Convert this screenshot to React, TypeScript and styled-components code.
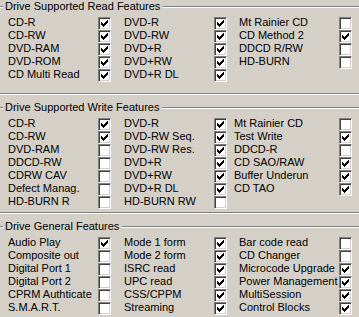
import React from "react";
import styled, { createGlobalStyle } from "styled-components";

const GlobalStyle = createGlobalStyle`
	html, body {
		margin: 0;
		padding: 0;
		background: #d4d0c8;
	}
	body {
		font-family: "Liberation Sans", Arial, sans-serif;
		font-size: 11px;
		color: #000;
	}
`

type Item = { label: string; on: boolean } | null;

const groups: { title: string; thirdGap: number; bottom: number; cols: Item[][] }[] = [
	{
		title: "Drive Supported Read Features",
		thirdGap: 12,
		bottom: 11,
		cols: [
			[
				{ label: "CD-R", on: true },
				{ label: "CD-RW", on: true },
				{ label: "DVD-RAM", on: true },
				{ label: "DVD-ROM", on: true },
				{ label: "CD Multi Read", on: true },
			],
			[
				{ label: "DVD-R", on: true },
				{ label: "DVD-RW", on: true },
				{ label: "DVD+R", on: true },
				{ label: "DVD+RW", on: true },
				{ label: "DVD+R DL", on: true },
			],
			[
				{ label: "Mt Rainier CD", on: false },
				{ label: "CD Method 2", on: true },
				{ label: "DDCD R/RW", on: false },
				{ label: "HD-BURN", on: false },
				null,
			],
		],
	},
	{
		title: "Drive Supported Write Features",
		thirdGap: 7,
		bottom: 3,
		cols: [
			[
				{ label: "CD-R", on: true },
				{ label: "CD-RW", on: true },
				{ label: "DVD-RAM", on: false },
				{ label: "DDCD-RW", on: false },
				{ label: "CDRW CAV", on: false },
				{ label: "Defect Manag.", on: false },
				{ label: "HD-BURN R", on: false },
			],
			[
				{ label: "DVD-R", on: true },
				{ label: "DVD-RW Seq.", on: true },
				{ label: "DVD-RW Res.", on: true },
				{ label: "DVD+R", on: true },
				{ label: "DVD+RW", on: true },
				{ label: "DVD+R DL", on: true },
				{ label: "HD-BURN RW", on: false },
			],
			[
				{ label: "Mt Rainier CD", on: false },
				{ label: "Test Write", on: true },
				{ label: "DDCD-R", on: false },
				{ label: "CD SAO/RAW", on: true },
				{ label: "Buffer Underun", on: true },
				{ label: "CD TAO", on: true },
				null,
			],
		],
	},
	{
		title: "Drive General Features",
		thirdGap: 12,
		bottom: 4,
		cols: [
			[
				{ label: "Audio Play", on: true },
				{ label: "Composite out", on: false },
				{ label: "Digital Port 1", on: false },
				{ label: "Digital Port 2", on: false },
				{ label: "CPRM Authticate", on: false },
				{ label: "S.M.A.R.T.", on: false },
			],
			[
				{ label: "Mode 1 form", on: true },
				{ label: "Mode 2 form", on: true },
				{ label: "ISRC read", on: true },
				{ label: "UPC read", on: true },
				{ label: "CSS/CPPM", on: true },
				{ label: "Streaming", on: true },
			],
			[
				{ label: "Bar code read", on: false },
				{ label: "CD Changer", on: false },
				{ label: "Microcode Upgrade", on: true },
				{ label: "Power Management", on: true },
				{ label: "MultiSession", on: true },
				{ label: "Control Blocks", on: true },
			],
		],
	},
];

// classic win9x check glyph, pixel by pixel (coords in the 13x13 box)
const checkPixels: [number, number][] = [
	[9, 3],
	[8, 4], [9, 4],
	[3, 5], [7, 5], [8, 5], [9, 5],
	[3, 6], [4, 6], [6, 6], [7, 6], [8, 6],
	[3, 7], [4, 7], [5, 7], [6, 7], [7, 7],
	[4, 8], [5, 8], [6, 8],
	[5, 9],
];

const CheckBox = ({ on }: { on: boolean }) => (
	<Box>
		{on && (
			<svg width="11" height="11" viewBox="1 1 11 11" shapeRendering="crispEdges">
				{checkPixels.map(([x, y]) => (
					<rect key={`${x}-${y}`} x={x} y={y} width="1" height="1" fill="#000" />
				))}
			</svg>
		)}
	</Box>
);

export default function App() {
	return (
		<>
			<GlobalStyle />
			<Page>
				{groups.map((g) => {
					const rows = g.cols[0].length;
					const cells: React.ReactNode[] = [];
					for (let r = 0; r < rows; r++) {
						g.cols.forEach((col, c) => {
							const item = col[r];
							cells.push(<Label key={`l${r}${c}`}>{item ? item.label : ""}</Label>);
							cells.push(
								<Cell key={`c${r}${c}`}>{item && <CheckBox on={item.on} />}</Cell>
							);
						});
					}
					return (
						<Group key={g.title}>
							<Legend>
								<Dash />
								<Title>{g.title}</Title>
								<Rule />
							</Legend>
							<Grid $thirdGap={g.thirdGap} $bottom={g.bottom}>
								{cells}
							</Grid>
							<Etched />
						</Group>
					);
				})}
			</Page>
		</>
	);
}

const Page = styled.div`
	width: 359px;
	height: 317px;
	overflow: hidden;
	display: flex;
	flex-direction: column;
	gap: 6px;
`

const Group = styled.section`
	display: flex;
	flex-direction: column;
`

const Legend = styled.div`
	display: flex;
	align-items: center;
	height: 13px;
`

const Etched = styled.div`
	height: 0;
	border-top: 1px solid #808080;
	border-bottom: 1px solid #ffffff;
`

const Dash = styled(Etched)`
	width: 3px;
`

const Rule = styled(Etched)`
	flex: 1 1 auto;
`

const Title = styled.span`
	padding: 0 3px 0 2px;
	line-height: 13px;
	white-space: nowrap;
`

const Grid = styled.div<{ $thirdGap: number; $bottom: number }>`
	display: grid;
	grid-template-columns: 90px 13px 103px 13px 112px 13px;
	grid-auto-rows: 13px;
	padding: 4px 0 ${(p) => p.$bottom}px 8px;

	& > :nth-child(6n + 3) {
		padding-left: 13px;
	}
	& > :nth-child(6n + 5) {
		padding-left: ${(p) => p.$thirdGap}px;
	}
`

const Label = styled.span`
	line-height: 10px;
	white-space: nowrap;
`

const Cell = styled.span`
	display: flex;
`

const Box = styled.span`
	box-sizing: border-box;
	width: 13px;
	height: 13px;
	background: #ffffff;
	border: 1px solid;
	border-color: #808080 #ffffff #ffffff #808080;
	box-shadow: inset 1px 1px #404040, inset -1px -1px #d4d0c8;
	display: flex;
`
